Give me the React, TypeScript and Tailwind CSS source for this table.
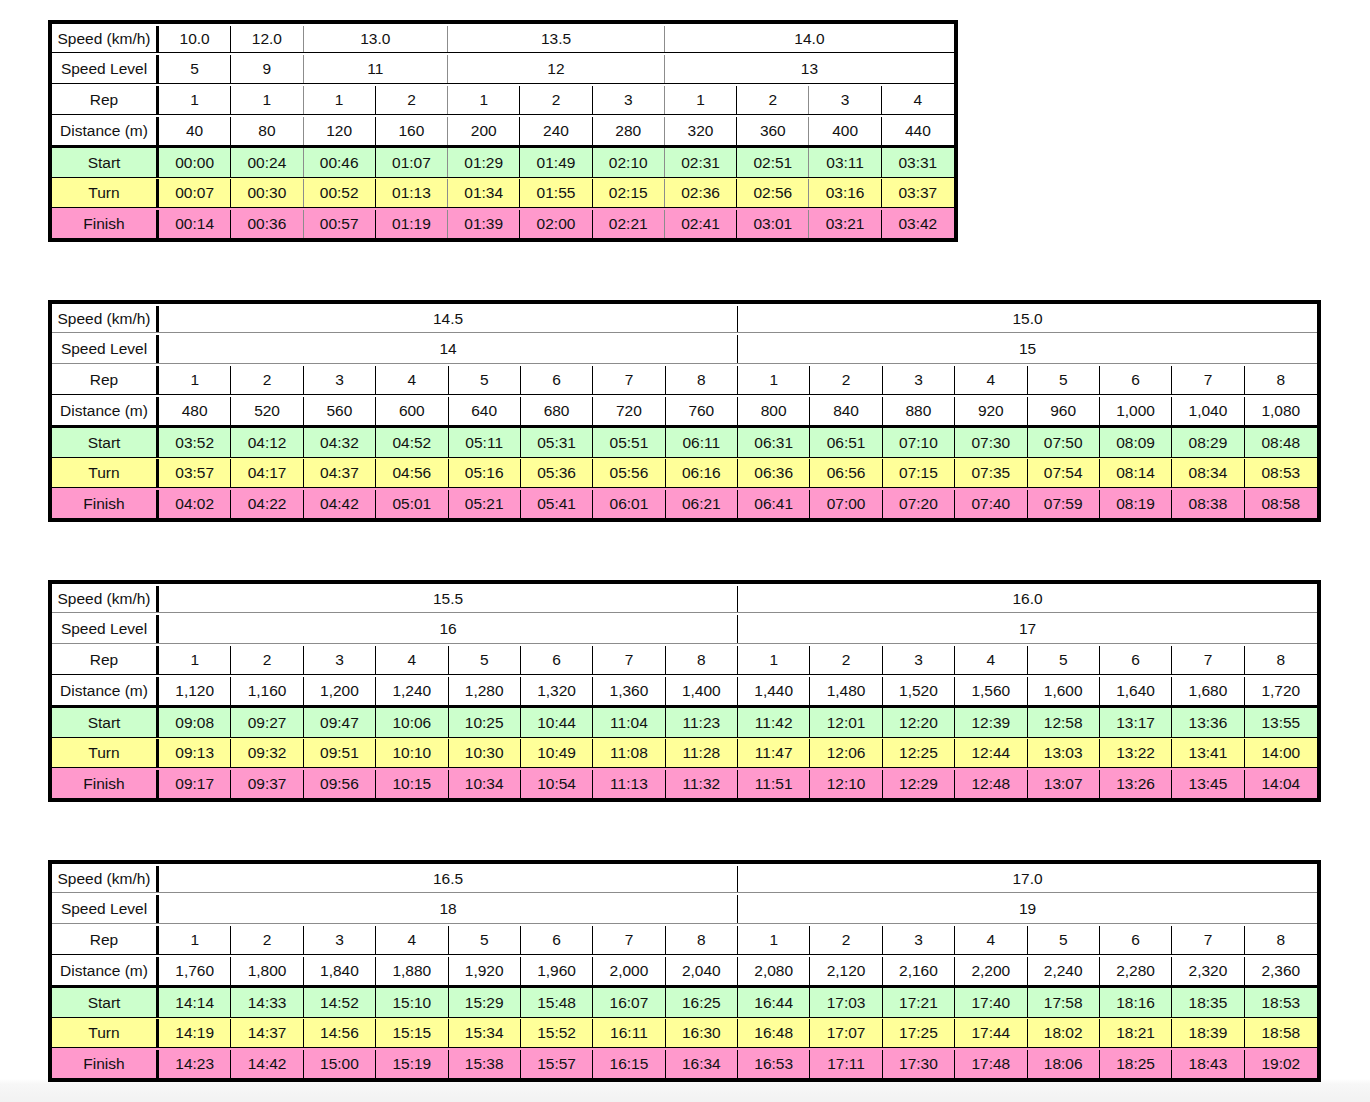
import React from "react";

type Group = { speed: string; level: string; reps: string[] };
type TableData = {
  cols: number;
  groups: Group[];
  dist: string[];
  start: string[];
  turn: string[];
  finish: string[];
  grayV: number[];
  grayH: boolean;
};

const s = (x: string) => x.split(" ");

const tables: TableData[] = [
  {
    cols: 11,
    groups: [
      { speed: "10.0", level: "5", reps: ["1"] },
      { speed: "12.0", level: "9", reps: ["1"] },
      { speed: "13.0", level: "11", reps: ["1", "2"] },
      { speed: "13.5", level: "12", reps: ["1", "2", "3"] },
      { speed: "14.0", level: "13", reps: ["1", "2", "3", "4"] },
    ],
    dist: s("40 80 120 160 200 240 280 320 360 400 440"),
    start: s("00:00 00:24 00:46 01:07 01:29 01:49 02:10 02:31 02:51 03:11 03:31"),
    turn: s("00:07 00:30 00:52 01:13 01:34 01:55 02:15 02:36 02:56 03:16 03:37"),
    finish: s("00:14 00:36 00:57 01:19 01:39 02:00 02:21 02:41 03:01 03:21 03:42"),
    grayV: [1, 3, 6, 8],
    grayH: false,
  },
  {
    cols: 16,
    groups: [
      { speed: "14.5", level: "14", reps: s("1 2 3 4 5 6 7 8") },
      { speed: "15.0", level: "15", reps: s("1 2 3 4 5 6 7 8") },
    ],
    dist: s("480 520 560 600 640 680 720 760 800 840 880 920 960 1,000 1,040 1,080"),
    start: s("03:52 04:12 04:32 04:52 05:11 05:31 05:51 06:11 06:31 06:51 07:10 07:30 07:50 08:09 08:29 08:48"),
    turn: s("03:57 04:17 04:37 04:56 05:16 05:36 05:56 06:16 06:36 06:56 07:15 07:35 07:54 08:14 08:34 08:53"),
    finish: s("04:02 04:22 04:42 05:01 05:21 05:41 06:01 06:21 06:41 07:00 07:20 07:40 07:59 08:19 08:38 08:58"),
    grayV: [],
    grayH: true,
  },
  {
    cols: 16,
    groups: [
      { speed: "15.5", level: "16", reps: s("1 2 3 4 5 6 7 8") },
      { speed: "16.0", level: "17", reps: s("1 2 3 4 5 6 7 8") },
    ],
    dist: s("1,120 1,160 1,200 1,240 1,280 1,320 1,360 1,400 1,440 1,480 1,520 1,560 1,600 1,640 1,680 1,720"),
    start: s("09:08 09:27 09:47 10:06 10:25 10:44 11:04 11:23 11:42 12:01 12:20 12:39 12:58 13:17 13:36 13:55"),
    turn: s("09:13 09:32 09:51 10:10 10:30 10:49 11:08 11:28 11:47 12:06 12:25 12:44 13:03 13:22 13:41 14:00"),
    finish: s("09:17 09:37 09:56 10:15 10:34 10:54 11:13 11:32 11:51 12:10 12:29 12:48 13:07 13:26 13:45 14:04"),
    grayV: [],
    grayH: true,
  },
  {
    cols: 16,
    groups: [
      { speed: "16.5", level: "18", reps: s("1 2 3 4 5 6 7 8") },
      { speed: "17.0", level: "19", reps: s("1 2 3 4 5 6 7 8") },
    ],
    dist: s("1,760 1,800 1,840 1,880 1,920 1,960 2,000 2,040 2,080 2,120 2,160 2,200 2,240 2,280 2,320 2,360"),
    start: s("14:14 14:33 14:52 15:10 15:29 15:48 16:07 16:25 16:44 17:03 17:21 17:40 17:58 18:16 18:35 18:53"),
    turn: s("14:19 14:37 14:56 15:15 15:34 15:52 16:11 16:30 16:48 17:07 17:25 17:44 18:02 18:21 18:39 18:58"),
    finish: s("14:23 14:42 15:00 15:19 15:38 15:57 16:15 16:34 16:53 17:11 17:30 17:48 18:06 18:25 18:43 19:02"),
    grayV: [],
    grayH: true,
  },
];

const spanClass: Record<number, string> = {
  1: "col-span-1",
  2: "col-span-2",
  3: "col-span-3",
  4: "col-span-4",
  8: "col-span-8",
};

function Cell({
  children,
  span = 1,
  last,
  gray,
}: {
  children: React.ReactNode;
  span?: number;
  last: boolean;
  gray: boolean;
}) {
  const border = last ? "" : gray ? "border-r border-[#8c8c8c]" : "border-r border-black";
  return (
    <div className={`${spanClass[span]} ${border} flex items-center justify-center min-w-0`}>
      {children}
    </div>
  );
}

function Label({ children }: { children: React.ReactNode }) {
  return (
    <div className="border-r-[3px] border-black flex items-center justify-center whitespace-nowrap">
      {children}
    </div>
  );
}

function Row({
  t,
  children,
  className,
}: {
  t: TableData;
  children: React.ReactNode;
  className: string;
}) {
  const grid =
    t.cols === 11
      ? "grid grid-cols-[107px_repeat(11,minmax(0,1fr))]"
      : "grid grid-cols-[107px_repeat(16,minmax(0,1fr))]";
  return <div className={`${grid} ${className}`}>{children}</div>;
}

function DataRow({
  t,
  label,
  values,
  className,
}: {
  t: TableData;
  label: string;
  values: string[];
  className: string;
}) {
  return (
    <Row t={t} className={className}>
      <Label>{label}</Label>
      {values.map((v, i) => (
        <Cell key={i} last={i === values.length - 1} gray={t.grayV.includes(i)}>
          {v}
        </Cell>
      ))}
    </Row>
  );
}

function GroupRow({
  t,
  label,
  field,
  className,
}: {
  t: TableData;
  label: string;
  field: "speed" | "level";
  className: string;
}) {
  let idx = 0;
  return (
    <Row t={t} className={className}>
      <Label>{label}</Label>
      {t.groups.map((g, gi) => {
        idx += g.reps.length;
        const endCol = idx - 1;
        return (
          <Cell
            key={gi}
            span={g.reps.length}
            last={gi === t.groups.length - 1}
            gray={t.grayV.includes(endCol)}
          >
            {g[field]}
          </Cell>
        );
      })}
    </Row>
  );
}

function Table({ t }: { t: TableData }) {
  const w = t.cols === 11 ? "w-[910px]" : "w-[1273px]";
  const hLine = t.grayH ? "border-b border-[#8c8c8c]" : "border-b border-black";
  const reps = t.groups.flatMap((g) => g.reps);
  return (
    <div className={`${w} border-4 border-black bg-white`}>
      <GroupRow t={t} label="Speed (km/h)" field="speed" className={`h-[29px] pt-[2px] ${hLine}`} />
      <GroupRow t={t} label="Speed Level" field="level" className={`h-[31px] pt-[2px] ${hLine}`} />
      <DataRow t={t} label="Rep" values={reps} className="h-[31px] pt-[2px] border-b border-black" />
      <DataRow t={t} label="Distance (m)" values={t.dist} className="h-[33px] pt-[2px] border-b-[3px] border-black" />
      <DataRow t={t} label="Start" values={t.start} className="h-[30px] border-b border-black bg-[#ccffcc]" />
      <DataRow t={t} label="Turn" values={t.turn} className="h-[30px] pt-[1px] border-b border-black bg-[#ffff99]" />
      <DataRow t={t} label="Finish" values={t.finish} className="h-[30px] pt-[2px] bg-[#ff99cc]" />
    </div>
  );
}

export default function App() {
  return (
    <div
      className="w-[1370px] h-[1102px] overflow-hidden bg-[linear-gradient(to_bottom,#ffffff_1079px,#f7f7f7_1084px,#f2f2f2_1102px)] text-[#111] text-[15.5px] leading-none"
      style={{ fontFamily: '"Liberation Sans", Arial, Helvetica, sans-serif' }}
    >
      <div className="flex flex-col gap-[58px] pt-[20px] pl-[48px]">
        {tables.map((t, i) => (
          <Table key={i} t={t} />
        ))}
      </div>
    </div>
  );
}
